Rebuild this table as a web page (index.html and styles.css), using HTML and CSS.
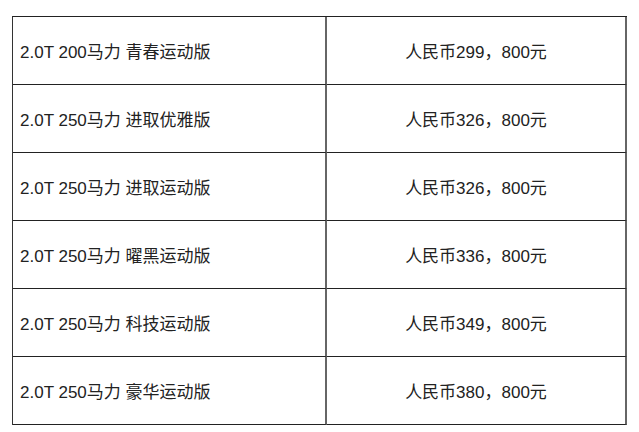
FILE: index.html
```html
<!DOCTYPE html>
<html lang="zh-CN">
<head>
<meta charset="utf-8">
<link rel="stylesheet" href="styles.css">
</head>
<body>
<div class="price-table">
  <div class="cell name">2.0T 200马力 青春运动版</div>
  <div class="cell price">人民币299，800元</div>
  <div class="cell name">2.0T 250马力 进取优雅版</div>
  <div class="cell price">人民币326，800元</div>
  <div class="cell name">2.0T 250马力 进取运动版</div>
  <div class="cell price">人民币326，800元</div>
  <div class="cell name">2.0T 250马力 曜黑运动版</div>
  <div class="cell price">人民币336，800元</div>
  <div class="cell name">2.0T 250马力 科技运动版</div>
  <div class="cell price">人民币349，800元</div>
  <div class="cell name">2.0T 250马力 豪华运动版</div>
  <div class="cell price">人民币380，800元</div>
</div>
</body>
</html>
```

FILE: styles.css
```css
html, body {
  margin: 0;
  padding: 0;
  background: #ffffff;
}
body {
  font-family: "Liberation Sans", "Noto Sans CJK SC", sans-serif;
  font-size: 17px;
  color: #222222;
}
.price-table {
  margin: 16px 0 0 12px;
  width: 614px;
  display: grid;
  grid-template-columns: 314px 300px;
  grid-auto-rows: 68px;
  border-top: 1px solid #222222;
  border-left: 1px solid #333333;
}
.cell {
  display: flex;
  align-items: center;
  border-bottom: 1px solid #222222;
  border-right: 2px solid #666666;
  box-sizing: border-box;
  white-space: nowrap;
}
.name {
  padding-left: 7px;
}
.price {
  justify-content: center;
}
```
